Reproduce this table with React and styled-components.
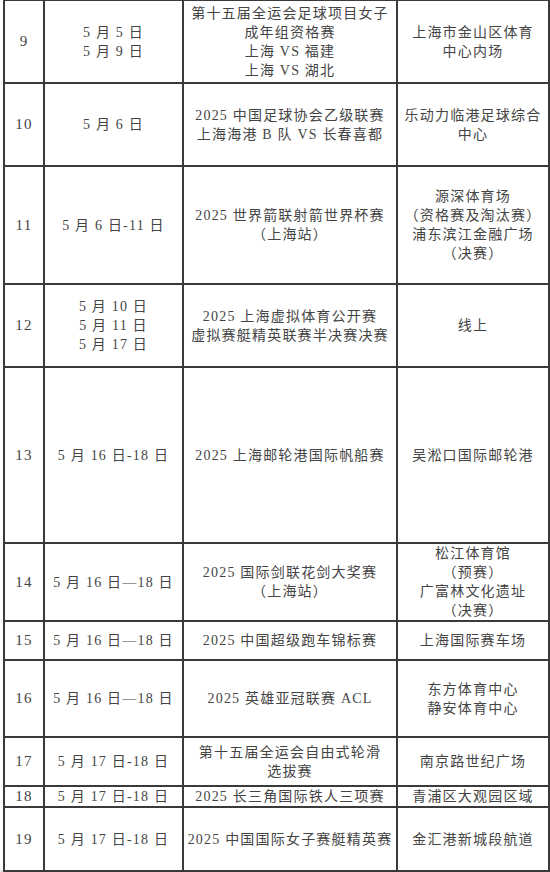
import React from 'react';
import styled, { createGlobalStyle } from 'styled-components';

const GlobalStyle = createGlobalStyle`
  html, body {
    margin: 0;
    padding: 0;
    background: #ffffff;
  }
  body {
    font-family: "Liberation Serif", "Noto Sans CJK SC", serif;
    color: #333333;
  }
`;

const Page = styled.div`
  width: 550px;
  height: 872px;
  overflow: hidden;
  background: linear-gradient(to bottom, #ffffff 0, #ffffff 870px, #e6e6e6 870px);
  padding: 0 0 0 3px;
  box-sizing: border-box;
`;

const Table = styled.table`
  border-collapse: collapse;
  table-layout: fixed;
  width: 545px;
  margin-top: -1px;
  background: #ffffff;
`;

const Row = styled.tr`
  height: ${(p) => p.$h}px;
`;

const Cell = styled.td`
  border: 2px solid #3a3a3a;
  padding: 0 2px;
  text-align: center;
  vertical-align: middle;
  font-size: ${(p) => (p.$num ? 15 : 14)}px;
  line-height: 19px;
  letter-spacing: 1.2px;
  color: #444444;
  overflow: hidden;
  white-space: nowrap;
`;

const Line = styled.div`
  display: block;
`;

const rows = [
  {
    no: '9',
    h: 83,
    date: ['5 月 5 日', '5 月 9 日'],
    event: ['第十五届全运会足球项目女子', '成年组资格赛', '上海 VS 福建', '上海 VS 湖北'],
    venue: ['上海市金山区体育', '中心内场'],
  },
  {
    no: '10',
    h: 83,
    date: ['5 月 6 日'],
    event: ['2025 中国足球协会乙级联赛', '上海海港 B 队 VS 长春喜都'],
    venue: ['乐动力临港足球综合', '中心'],
  },
  {
    no: '11',
    h: 118,
    date: ['5 月 6 日-11 日'],
    event: ['2025 世界箭联射箭世界杯赛', '（上海站）'],
    venue: ['源深体育场', '（资格赛及淘汰赛）', '浦东滨江金融广场', '（决赛）'],
  },
  {
    no: '12',
    h: 83,
    date: ['5 月 10 日', '5 月 11 日', '5 月 17 日'],
    event: ['2025 上海虚拟体育公开赛', '虚拟赛艇精英联赛半决赛决赛'],
    venue: ['线上'],
  },
  {
    no: '13',
    h: 176,
    date: ['5 月 16 日-18 日'],
    event: ['2025 上海邮轮港国际帆船赛'],
    venue: ['吴淞口国际邮轮港'],
  },
  {
    no: '14',
    h: 78,
    date: ['5 月 16 日—18 日'],
    event: ['2025 国际剑联花剑大奖赛', '（上海站）'],
    venue: ['松江体育馆', '（预赛）', '广富林文化遗址', '（决赛）'],
  },
  {
    no: '15',
    h: 39,
    date: ['5 月 16 日—18 日'],
    event: ['2025 中国超级跑车锦标赛'],
    venue: ['上海国际赛车场'],
  },
  {
    no: '16',
    h: 77,
    date: ['5 月 16 日—18 日'],
    event: ['2025 英雄亚冠联赛 ACL'],
    venue: ['东方体育中心', '静安体育中心'],
  },
  {
    no: '17',
    h: 49,
    date: ['5 月 17 日-18 日'],
    event: ['第十五届全运会自由式轮滑', '选拔赛'],
    venue: ['南京路世纪广场'],
  },
  {
    no: '18',
    h: 20,
    date: ['5 月 17 日-18 日'],
    event: ['2025 长三角国际铁人三项赛'],
    venue: ['青浦区大观园区域'],
  },
  {
    no: '19',
    h: 64,
    date: ['5 月 17 日-18 日'],
    event: ['2025 中国国际女子赛艇精英赛'],
    venue: ['金汇港新城段航道'],
  },
];

const Lines = ({ items }) => items.map((t, i) => <Line key={i}>{t}</Line>);

export default function App() {
  return (
    <>
      <GlobalStyle />
      <Page>
        <Table>
          <colgroup>
            <col style={{ width: 40 }} />
            <col style={{ width: 139 }} />
            <col style={{ width: 214 }} />
            <col style={{ width: 152 }} />
          </colgroup>
          <tbody>
            {rows.map((r) => (
              <Row key={r.no} $h={r.h}>
                <Cell $num>{r.no}</Cell>
                <Cell>
                  <Lines items={r.date} />
                </Cell>
                <Cell>
                  <Lines items={r.event} />
                </Cell>
                <Cell>
                  <Lines items={r.venue} />
                </Cell>
              </Row>
            ))}
          </tbody>
        </Table>
      </Page>
    </>
  );
}
